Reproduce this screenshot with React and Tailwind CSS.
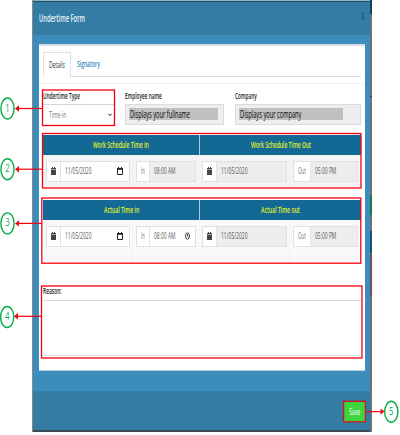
import { useLayoutEffect, useRef, useState } from "react";

// Condensed label: squeezes its text horizontally to the given width.
function Fit({ w, className = "", children }) {
  const ref = useRef(null);
  const [scale, setScale] = useState(1);
  useLayoutEffect(() => {
    setScale(w / ref.current.offsetWidth);
  }, [w]);
  return (
    <span className="block shrink-0 whitespace-nowrap" style={{ width: w }}>
      <span
        ref={ref}
        className={"block w-max origin-left whitespace-nowrap " + className}
        style={{ transform: `scaleX(${scale})` }}
      >
        {children}
      </span>
    </span>
  );
}

function CalendarSolid() {
  return (
    <svg className="-mt-px h-[8px] w-[5px]" viewBox="0 0 5 8" fill="#444">
      <path d="M1 0h1v1h1V0h1v1h1v1.300H0V1h1zM0 2.700h5V8H0z" />
    </svg>
  );
}

function CalendarOutline() {
  return (
    <svg className="-mt-px h-[8px] w-[6px]" viewBox="0 0 6 8">
      <path d="M.5 1.500h5v6h-5z" fill="none" stroke="#222" />
      <path d="M0 1h6v1.700H0zM1 0h1v1H1zM4 0h1v1H4z" fill="#222" />
    </svg>
  );
}

function Clock() {
  return (
    <svg className="-mt-px h-[8px] w-[5px]" viewBox="0 0 5 8" fill="none" stroke="#333" strokeWidth="0.9">
      <ellipse cx="2.500" cy="4" rx="2" ry="3.200" />
      <path d="M2.500 2v2.200l1 .8" />
    </svg>
  );
}

function DateField({ width, disabled }) {
  return (
    <div className={"flex h-[21px] border border-[#dde0e6] bg-white " + width}>
      <div className="flex w-[14px] shrink-0 items-center justify-center border-r border-[#e0e3e8]">
        <CalendarSolid />
      </div>
      <div className={"flex grow items-center justify-between pr-[6px] pl-[4px] " + (disabled ? "bg-[#ededed]" : "")}>
        <Fit w={26.5} className="-mt-px text-[8.500px] leading-[10px] text-[#5c5c5c]">11/05/2020</Fit>
        {!disabled && <CalendarOutline />}
      </div>
    </div>
  );
}

function TimeField({ label, labelWidth, addon, time, width, disabled }) {
  return (
    <div className={"flex h-[21px] border border-[#dde0e6] bg-white " + width}>
      <div className={"flex shrink-0 items-center justify-center border-r border-[#e0e3e8] " + addon}>
        <Fit w={labelWidth} className="-mt-px text-[8.500px] leading-[10px] text-[#707070]">{label}</Fit>
      </div>
      <div className={"flex grow items-center justify-between pr-[5px] pl-[4px] " + (disabled ? "bg-[#ededed]" : "")}>
        <Fit w={21.5} className="-mt-px text-[8.500px] leading-[10px] text-[#5c5c5c]">{time}</Fit>
        {!disabled && <Clock />}
      </div>
    </div>
  );
}

function Schedule({ left, leftWidth, right, rightWidth, editable, divided }) {
  return (
    <div>
      <div className="flex h-[20px] bg-[#136994] text-[#e6f21d]">
        <div className="flex w-[157px] items-center justify-center border-r border-[#a5cddd]">
          <Fit w={leftWidth} className="text-[8.500px] leading-[10px] font-semibold">{left}</Fit>
        </div>
        <div className="flex grow items-center justify-center">
          <Fit w={rightWidth} className="text-[8.500px] leading-[10px] font-semibold">{right}</Fit>
        </div>
      </div>
      <div className={"flex pt-[6px] pl-[3px] " + (divided ? "h-[42px] bg-[#f9f9f9]" : "h-[32px] bg-[#f4f4f4]")}>
        <DateField width="w-[84px]" />
        <div className="-mt-[6px] w-[3px] border-r border-[#f1f1f1]" />
        <div className="w-[3px]" />
        <TimeField label="In" labelWidth={4} addon="w-[13px]" time="08:00 AM" width="w-[60px]" disabled={!editable} />
        <div className="w-[6px]" />
        <DateField width="w-[85px]" disabled />
        <div className="-mt-[6px] w-[3px] border-r border-[#f1f1f1]" />
        <div className="w-[3px]" />
        <TimeField label="Out" labelWidth={8} addon="w-[17px]" time="05:00 PM" width="w-[65px]" disabled />
      </div>
    </div>
  );
}

function ReadOnly({ label, labelWidth, text, textWidth, box, bar }) {
  return (
    <div className={box}>
      <div className="flex h-[16px] items-center">
        <Fit w={labelWidth} className="-mt-px text-[8.500px] leading-[10px] font-semibold text-[#222]">{label}</Fit>
      </div>
      <div className="h-[21px] border border-[#d8dbe2] bg-[#eee] pt-[3px] pl-[3px]">
        <div className={"flex h-[12px] items-center bg-[#c0c0c0] pl-px " + bar}>
          <Fit w={textWidth} className="-mt-px text-[10px] leading-[12px] text-black">{text}</Fit>
        </div>
      </div>
    </div>
  );
}

const steps = [
  { n: 1, cx: 7.5, cy: 108.5, from: 42, to: 15 },
  { n: 2, cx: 7.5, cy: 169.2, from: 42, to: 15 },
  { n: 3, cx: 7.5, cy: 223.4, from: 42, to: 15 },
  { n: 4, cx: 7.2, cy: 317, from: 42, to: 14 },
  { n: 5, cx: 391.3, cy: 411.7, from: 366, to: 384.5 },
];

function Callouts() {
  return (
    <svg className="pointer-events-none absolute inset-0 h-[435px] w-[400px]" viewBox="0 0 400 435">
      <g fill="none" stroke="#f50010" strokeWidth="1.300">
        <rect x="42.500" y="90" width="72" height="35.500" />
        <rect x="42.500" y="133.500" width="318.500" height="54.500" />
        <rect x="41.800" y="198" width="319" height="65.200" />
        <rect x="41.500" y="286" width="320.500" height="72" />
        <rect x="343.600" y="401.300" width="21.800" height="20.500" stroke="#d5141c" />
      </g>
      {steps.map(({ n, cx, cy, from, to }) => {
        const y = n === 4 ? 316.3 : n === 5 ? 411.6 : cy;
        const back = to < from ? 4 : -4;
        return (
          <g key={n}>
            <path d={`M${from} ${y}H${to + back}`} stroke="#f50010" strokeWidth="1.200" />
            <path d={`M${to} ${y}l${back} -3.200v6.400z`} fill="#f50010" />
            <ellipse cx={cx} cy={cy} rx="6.600" ry="10.500" fill="white" stroke="#08ad4e" strokeWidth="1.400" />
            <text
              transform={`translate(${cx} ${cy + 3}) scale(.68 1)`}
              textAnchor="middle"
              fontSize="11.500"
              fill="#08ad4e"
            >
              {n}
            </text>
          </g>
        );
      })}
    </svg>
  );
}

export default function App() {
  return (
    <div className="relative flex h-[435px] w-[400px] overflow-hidden bg-white pl-[32px] font-['Open_Sans','Noto_Sans',sans-serif]">
      <div className="h-[432px] w-px bg-[#858b8d]" />
      <div className="flex h-[432px] w-[337px] flex-col border-t border-b-2 border-t-[#8fb5ba] border-b-[#3e4b54] bg-[#3c8dbc]">
        <header className="flex h-[34px] items-center justify-between border-t border-b border-t-[#1d526c] border-b-[#3580ab] bg-[#357ca5] pr-[5px] pl-[6px]">
          <Fit w={46} className="text-[10px] leading-[14px] font-semibold text-[#e9f3f8]">Undertime Form</Fit>
          <Fit w={4} className="-mt-[4px] text-[10.500px] leading-[14px] text-[#1c4f6e]">X</Fit>
        </header>

        <main className="mt-[9px] ml-[6px] h-[327px] w-[326px] border-t-2 border-b border-t-[#d2dde8] border-b-[#b9cedd] bg-white">
          <nav className="mt-[6px] ml-[4px] flex h-[25px] w-[318px]">
            <div className="flex w-[28px] items-center justify-center border-x border-t border-[#dcdfe4]">
              <Fit w={16} className="-mt-px text-[8.500px] leading-[10px] text-[#333]">Details</Fit>
            </div>
            <div className="flex grow items-center border-b border-[#dcdfe2] pl-[6px]">
              <Fit w={23} className="text-[8.500px] leading-[10px] font-semibold text-[#2e83b9]">Signatory</Fit>
            </div>
          </nav>
          <div className="h-[7px] border-b border-[#f1f1f1]" />

          <section className="mt-[4px] ml-[4px] flex">
            <div className="w-[71px]">
              <div className="flex h-[16px] items-center">
                <Fit w={37} className="-mt-px text-[8.500px] leading-[10px] font-semibold text-[#222]">Undertime Type</Fit>
              </div>
              <div className="flex h-[21px] items-center justify-between border-t border-[#d2d6de] pr-[2px] pl-[6px]">
                <Fit w={17.5} className="-mt-px text-[8.500px] leading-[10px] text-[#777]">Time-in</Fit>
                <svg className="h-[4px] w-[4px]" viewBox="0 0 4 4" fill="none" stroke="#333">
                  <path d="M.4.700L2 2.700L3.600.700" />
                </svg>
              </div>
            </div>
            <div className="w-[11px]" />
            <ReadOnly label="Employee name" labelWidth={37} text="Displays your fullname" textWidth={60} box="w-[99px]" bar="w-[89px]" />
            <div className="w-[11px]" />
            <ReadOnly label="Company" labelWidth={22} text="Displays your company" textWidth={61.5} box="w-[126px]" bar="w-[104px]" />
          </section>

          <section className="mt-[10px] ml-[4px] w-[318px]">
            <Schedule left="Work Schedule Time In" leftWidth={56} right="Work Schedule Time Out" rightWidth={60} />
          </section>
          <section className="mt-[13px] ml-[4px] w-[318px]">
            <Schedule left="Actual Time in" leftWidth={35} right="Actual Time out" rightWidth={38.5} editable divided />
          </section>

          <section className="mt-[22px] ml-[4px] w-[318px]">
            <div className="flex h-[16px] items-center">
              <Fit w={18.5} className="-mt-[2px] text-[8.500px] leading-[10px] font-semibold text-[#222]">Reason:</Fit>
            </div>
            <div className="h-[56px] border-y border-[#d7dae1]" />
          </section>
        </main>

        <footer className="mt-auto flex h-[39px] items-center justify-end border-t border-[#3580ab] bg-[#357ca5] pr-[5px]">
          <div className="mt-[2px] flex h-[20px] w-[21px] items-center justify-center bg-[#3ed540]">
            <Fit w={11} className="text-[8.500px] leading-[10px] text-white">Save</Fit>
          </div>
        </footer>
      </div>
      <div className="flex h-[432px] w-[2px] flex-col bg-[#6b7175]">
        <div className="h-[14px] bg-[#124259]" />
        <div className="mt-[82px] h-px bg-[#124e6b]" />
        <div className="mt-[98px] h-[20px] bg-[#20733c]" />
        <div className="mt-[16px] h-[22px] bg-[#18516e]" />
        <div className="mt-px h-[42px] bg-[#744f55]" />
      </div>
      <Callouts />
    </div>
  );
}
